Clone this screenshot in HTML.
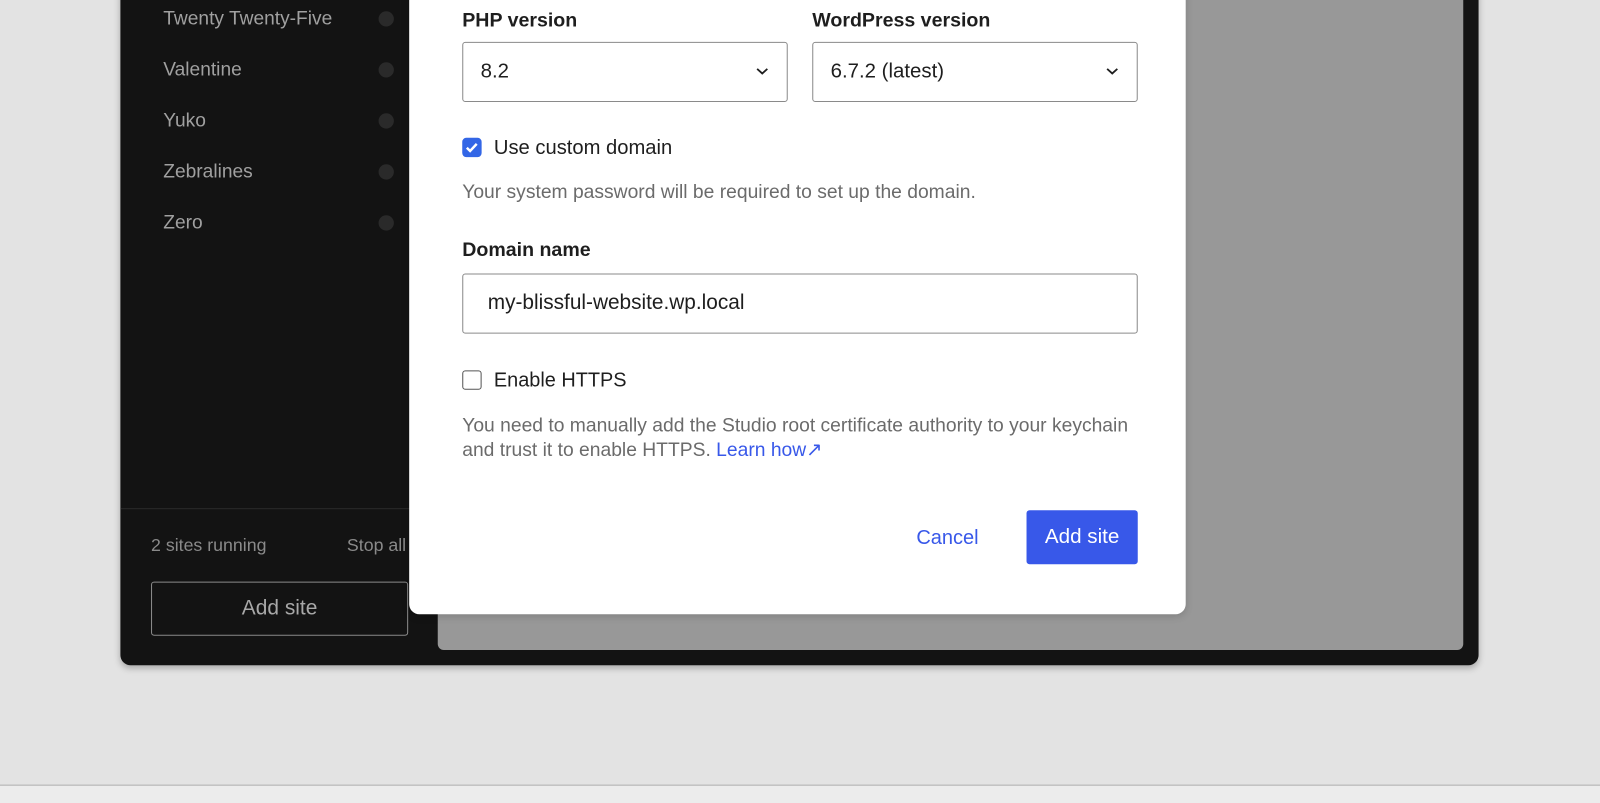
<!DOCTYPE html>
<html><head><meta charset="utf-8"><style>
*{box-sizing:border-box;margin:0;padding:0}
body{width:1600px;height:787px;background:#e3e3e3;font-family:"Liberation Sans",sans-serif;position:relative;overflow:hidden}
#w{position:absolute;left:0;top:0;width:1568px;height:771px;transform:scale(1.0204);transform-origin:0 0}
.a{position:absolute;white-space:nowrap}
.win{left:118px;top:-20px;width:1331px;height:672px;background:#131313;border-radius:10px;box-shadow:0 3px 6px rgba(0,0,0,.25)}
.gray{left:429px;top:-20px;width:1005px;height:657px;background:#989898;border-radius:6px;border-top:1px solid #8d8d8d}
.side{color:#a0a0a0;font-size:18.8px;left:160px}
.dot{left:371px;width:15px;height:15px;border-radius:50%;background:#2a2a2a}
.modal{left:401px;top:-20px;width:761px;height:622px;background:#fff;border-radius:10px;box-shadow:0 2px 8px rgba(0,0,0,.15)}
.lbl{font-size:19.2px;font-weight:bold;color:#1e1e1e}
.box{border:1px solid #8a8a8a;border-radius:3px;background:#fff;height:59px;font-size:20px;color:#1e1e1e;padding:0 17px;line-height:57px}
.help{font-size:18.9px;color:#6b6b6b}
.chev{position:absolute;right:18px;top:24px}
</style></head><body><div id="w">
<div class="a win"></div>
<div class="a gray"></div>
<div class="a side" style="top:7px">Twenty Twenty-Five</div><div class="a dot" style="top:11px"></div>
<div class="a side" style="top:57px">Valentine</div><div class="a dot" style="top:61px"></div>
<div class="a side" style="top:107px">Yuko</div><div class="a dot" style="top:111px"></div>
<div class="a side" style="top:157px">Zebralines</div><div class="a dot" style="top:161px"></div>
<div class="a side" style="top:207px">Zero</div><div class="a dot" style="top:211px"></div>
<div class="a" style="left:118px;top:498px;width:311px;height:1px;background:#2a2a2a"></div>
<div class="a" style="left:148px;top:524px;font-size:17.4px;color:#8a8a8a">2 sites running</div>
<div class="a" style="left:340px;top:524px;font-size:17.4px;color:#8a8a8a">Stop all</div>
<div class="a" style="left:148px;top:570px;width:252px;height:53px;border:1.5px solid #8a8a8a;border-radius:3px;color:#a8a8a8;font-size:20.5px;text-align:center;line-height:50px">Add site</div>
<div class="a modal"></div>
<div class="a lbl" style="left:453px;top:10px">PHP version</div>
<div class="a lbl" style="left:796px;top:10px">WordPress version</div>
<div class="a box" style="left:453px;top:41px;width:319px">8.2<svg class="chev" width="12" height="8" viewBox="0 0 12 8"><path d="M1 1.5l5 4.5 5-4.5" fill="none" stroke="#1e1e1e" stroke-width="1.8"/></svg></div>
<div class="a box" style="left:796px;top:41px;width:319px">6.7.2 (latest)<svg class="chev" width="12" height="8" viewBox="0 0 12 8"><path d="M1 1.5l5 4.5 5-4.5" fill="none" stroke="#1e1e1e" stroke-width="1.8"/></svg></div>
<div class="a" style="left:453px;top:135px;width:19px;height:19px;background:#3366e6;border-radius:4px"><svg width="19" height="19" viewBox="0 0 19 19"><path d="M4.5 9.8l3.2 3.2 6.5-7" fill="none" stroke="#fff" stroke-width="2.4"/></svg></div>
<div class="a" style="left:484px;top:134px;font-size:19.8px;color:#1e1e1e">Use custom domain</div>
<div class="a help" style="left:453px;top:178px">Your system password will be required to set up the domain.</div>
<div class="a lbl" style="left:453px;top:235px">Domain name</div>
<div class="a box" style="left:453px;top:268px;width:662px;padding-left:24px;font-size:20.4px">my-blissful-website.wp.local</div>
<div class="a" style="left:453px;top:363px;width:19px;height:19px;border:1.5px solid #555;border-radius:3px;background:#fff"></div>
<div class="a" style="left:484px;top:362px;font-size:19.5px;color:#1e1e1e">Enable HTTPS</div>
<div class="a help" style="left:453px;top:406px;line-height:24px">You need to manually add the Studio root certificate authority to your keychain<br>and trust it to enable HTTPS. <span style="color:#3858e9">Learn how↗</span></div>
<div class="a" style="left:898px;top:516px;font-size:19.6px;color:#3858e9">Cancel</div>
<div class="a" style="left:1006px;top:500px;width:109px;height:53px;background:#3858e9;border-radius:3px;color:#fff;font-size:20.2px;text-align:center;line-height:53px">Add site</div>
<div class="a" style="left:0;top:769px;width:1600px;height:1px;background:#a8a8a8"></div>
<div class="a" style="left:0;top:770px;width:1600px;height:17px;background:#ececec"></div>
</div></body></html>
